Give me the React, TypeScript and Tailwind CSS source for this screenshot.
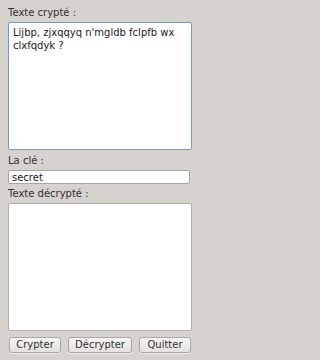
import React from "react"

const font = { fontFamily: '"DejaVu Sans", "Noto Sans", sans-serif' }

function Label({ children }: { children: React.ReactNode }) {
  return <div className="h-[14px] text-[10px] leading-[14px] text-[#33312d]">{children}</div>
}

function Btn({ children, w }: { children: React.ReactNode; w: string }) {
  return (
    <button
      className={`${w} h-[16px] rounded-[3px] border border-[#aaa7a2] bg-gradient-to-b from-[#f7f6f5] to-[#e4e2df] text-[10px] leading-[14px] text-[#33312d] shadow-[0_1px_0_rgba(255,255,255,0.6)]`}
    >
      {children}
    </button>
  )
}

export default function App() {
  return (
    <div className="min-h-screen w-full bg-[#d6d3cf]">
      <div className="flex h-[360px] w-[200px] flex-col px-[8px]" style={font}>
        <div className="mt-[6px]">
          <Label>Texte crypté :</Label>
        </div>
        <textarea
          className="mt-[2px] h-[128px] w-[184px] resize-none rounded-[2px] border border-[#6e9bd3] bg-white px-[4px] py-[3px] text-[10px] leading-[13px] text-[#1a1a1a] outline-none"
          defaultValue="Lijbp, zjxqqyq n'mgldb fclpfb wx clxfqdyk ?"
        />
        <div className="mt-[4px]">
          <Label>La clé :</Label>
        </div>
        <input
          className="mt-[2px] h-[14px] w-[182px] rounded-[2px] border border-[#a9a6a1] bg-white px-[3px] text-[10px] leading-[12px] text-[#1a1a1a] outline-none"
          defaultValue="secret"
        />
        <div className="mt-[3px]">
          <Label>Texte décrypté :</Label>
        </div>
        <textarea className="mt-[2px] h-[128px] w-[184px] resize-none rounded-[2px] border border-[#b3b0ab] bg-white outline-none" />
        <div className="mt-[6px] flex gap-[7px] pl-[1px]">
          <Btn w="w-[52px]">Crypter</Btn>
          <Btn w="w-[64px]">Décrypter</Btn>
          <Btn w="w-[52px]">Quitter</Btn>
        </div>
      </div>
    </div>
  )
}
